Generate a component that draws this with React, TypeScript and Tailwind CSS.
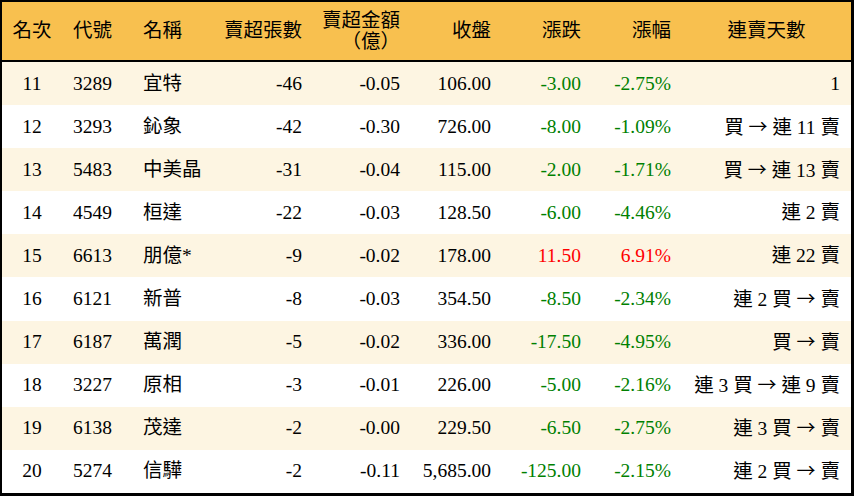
import React from "react";

type Row = {
  rank: string;
  code: string;
  name: string;
  lots: string;
  amt: string;
  close: string;
  chg: string;
  pct: string;
  days: string;
  up?: boolean;
};

const rows: Row[] = [
  { rank: "11", code: "3289", name: "宜特", lots: "-46", amt: "-0.05", close: "106.00", chg: "-3.00", pct: "-2.75%", days: "1" },
  { rank: "12", code: "3293", name: "鈊象", lots: "-42", amt: "-0.30", close: "726.00", chg: "-8.00", pct: "-1.09%", days: "買 → 連 11 賣" },
  { rank: "13", code: "5483", name: "中美晶", lots: "-31", amt: "-0.04", close: "115.00", chg: "-2.00", pct: "-1.71%", days: "買 → 連 13 賣" },
  { rank: "14", code: "4549", name: "桓達", lots: "-22", amt: "-0.03", close: "128.50", chg: "-6.00", pct: "-4.46%", days: "連 2 賣" },
  { rank: "15", code: "6613", name: "朋億*", lots: "-9", amt: "-0.02", close: "178.00", chg: "11.50", pct: "6.91%", days: "連 22 賣", up: true },
  { rank: "16", code: "6121", name: "新普", lots: "-8", amt: "-0.03", close: "354.50", chg: "-8.50", pct: "-2.34%", days: "連 2 買 → 賣" },
  { rank: "17", code: "6187", name: "萬潤", lots: "-5", amt: "-0.02", close: "336.00", chg: "-17.50", pct: "-4.95%", days: "買 → 賣" },
  { rank: "18", code: "3227", name: "原相", lots: "-3", amt: "-0.01", close: "226.00", chg: "-5.00", pct: "-2.16%", days: "連 3 買 → 連 9 賣" },
  { rank: "19", code: "6138", name: "茂達", lots: "-2", amt: "-0.00", close: "229.50", chg: "-6.50", pct: "-2.75%", days: "連 3 買 → 賣" },
  { rank: "20", code: "5274", name: "信驊", lots: "-2", amt: "-0.11", close: "5,685.00", chg: "-125.00", pct: "-2.15%", days: "連 2 買 → 賣" },
];

const font = {
  fontFamily: '"Liberation Serif", "Noto Sans CJK TC", serif',
};

function Days({ text }: { text: string }) {
  const parts = text.split("→");
  return (
    <>
      {parts.map((p, i) => (
        <React.Fragment key={i}>
          {i > 0 && (
            <span className="[font-family:'Noto_Sans_CJK_TC',sans-serif] text-[19px]">→</span>
          )}
          {p}
        </React.Fragment>
      ))}
    </>
  );
}

const cols = "grid grid-cols-[60px_68px_80px_103px_98px_91px_90px_90px_169px] items-center";

export default function App() {
  return (
    <div
      className="w-[854px] h-[496px] bg-white text-black border-l-2 border-t-2 border-r-[3px] border-b-[3px] border-black flex flex-col text-[19.5px] leading-[20px]"
      style={font}
    >
      <div className={"h-[60px] bg-[#F8C04F] border-b-2 border-black shrink-0 " + cols}>
        <div className="text-center">名次</div>
        <div className="pl-[11px]">代號</div>
        <div className="pl-[13px]">名稱</div>
        <div className="text-right pr-[11px]">賣超張數</div>
        <div className="text-right pr-[11px] flex flex-col">
          <span>賣超金額</span>
          <span className="pt-[1px]">（億）</span>
        </div>
        <div className="text-right pr-[11px]">收盤</div>
        <div className="text-right pr-[11px]">漲跌</div>
        <div className="text-right pr-[11px]">漲幅</div>
        <div className="text-center">連賣天數</div>
      </div>
      <div className="flex-1 flex flex-col">
        {rows.map((r, i) => (
          <div
            key={r.rank}
            className={"flex-1 " + cols + " " + (i % 2 === 0 ? "bg-[#FDF5E2]" : "bg-white")}
          >
            <div className="text-center">{r.rank}</div>
            <div className="pl-[11px]">{r.code}</div>
            <div className="pl-[13px]">{r.name}</div>
            <div className="text-right pr-[11px]">{r.lots}</div>
            <div className="text-right pr-[11px]">{r.amt}</div>
            <div className="text-right pr-[11px]">{r.close}</div>
            <div className={"text-right pr-[11px] " + (r.up ? "text-[#FF0000]" : "text-[#008000]")}>{r.chg}</div>
            <div className={"text-right pr-[11px] " + (r.up ? "text-[#FF0000]" : "text-[#008000]")}>{r.pct}</div>
            <div className="text-right pr-[11px] whitespace-pre">
              <Days text={r.days} />
            </div>
          </div>
        ))}
      </div>
    </div>
  );
}
